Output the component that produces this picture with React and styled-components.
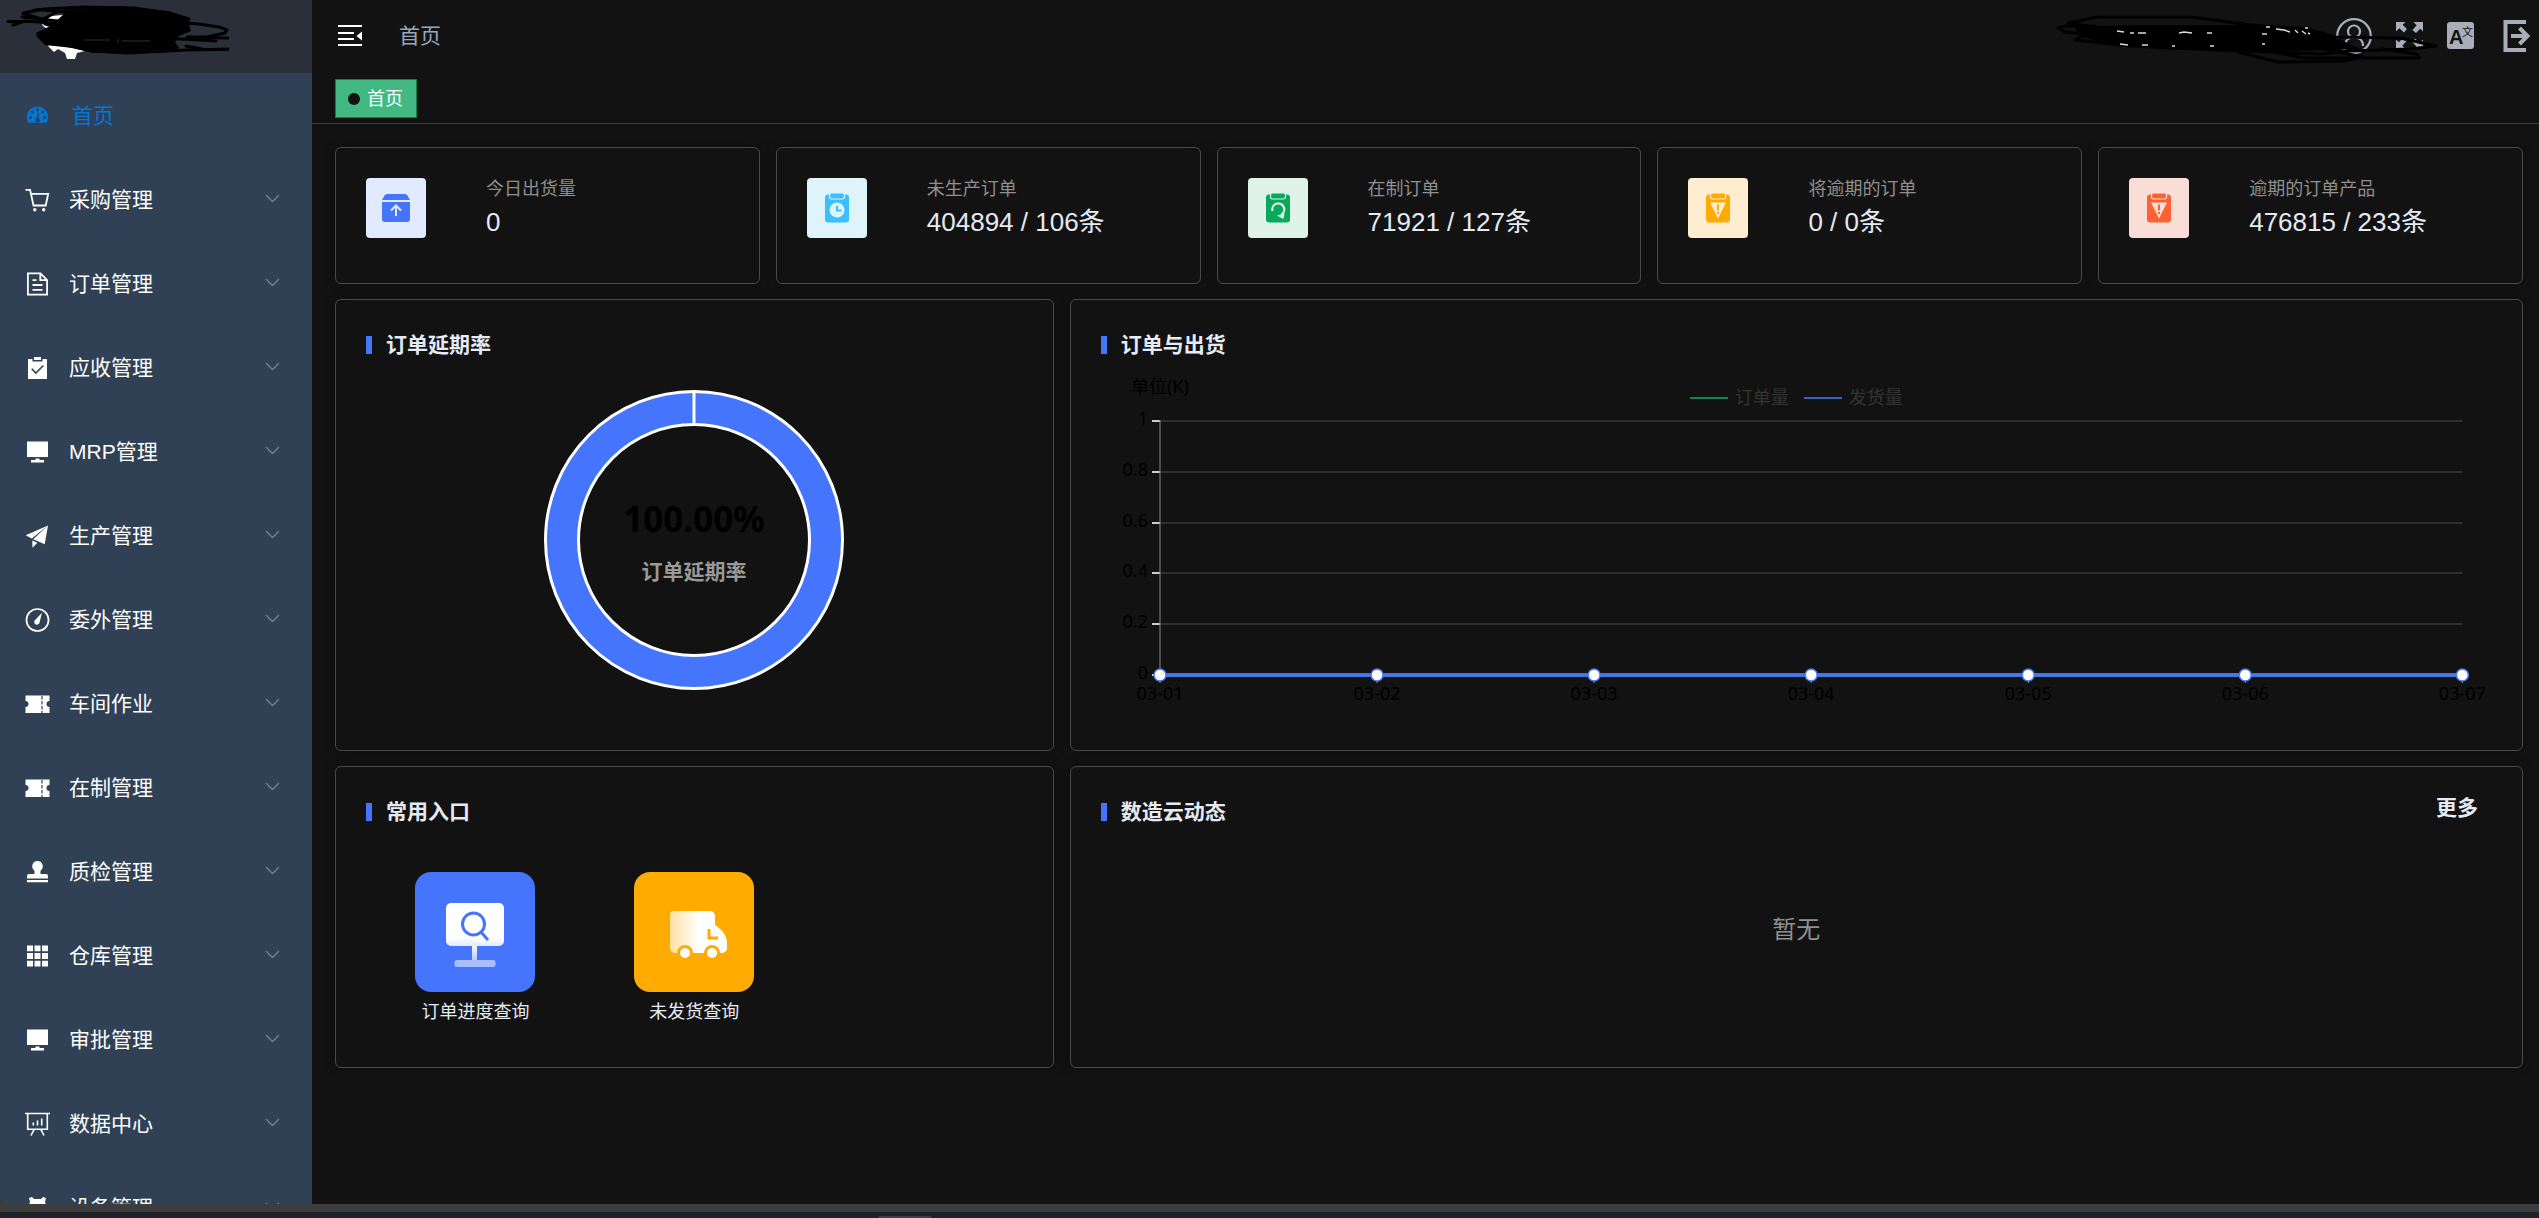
import React from "react";
import styled, { createGlobalStyle } from "styled-components";

const ui = '"Liberation Sans", "Noto Sans CJK SC", sans-serif';
const chartFont = '"Noto Sans", "Noto Sans CJK SC", sans-serif';

const GlobalStyle = createGlobalStyle`
  *, *::before, *::after { box-sizing: border-box; }
  body { margin: 0; background: #121212; color: #e5eaf3; font-family: ${ui}; overflow: hidden; }
  button { font: inherit; color: inherit; background: none; border: 0; padding: 0; cursor: pointer; }
  a { color: inherit; text-decoration: none; }
  ul { list-style: none; margin: 0; padding: 0; }
  h2, p { margin: 0; }
  svg { display: block; }
`;

const Screen = styled.div`
  display: flex;
  flex-direction: column;
  height: 100vh;
  background: #3c3c3c;
`;

const Shell = styled.div`
  display: flex;
  flex: 1;
  min-height: 0;
`;

const Taskbar = styled.footer`
  display: flex;
  align-items: flex-end;
  flex: none;
  height: 14px;
  padding-left: 878px;
  border-top: 8px solid #3d3d3d;
  background: #1f2227;
`;

const TaskTab = styled.div`
  width: 54px;
  height: 2px;
  border-radius: 2px 2px 0 0;
  background: #3c4046;
`;

const Sidebar = styled.aside`
  flex: none;
  width: 312px;
  overflow: hidden;
  border-bottom-left-radius: 8px;
  background: #304156;
`;

const Brand = styled.div`
  height: 73px;
  padding: 5px 0 0 5px;
  background: #2b2f3a;
`;

const Menu = styled.ul`
  padding-top: 1px;
`;

const MenuButton = styled.button`
  display: flex;
  align-items: center;
  width: 100%;
  height: 84px;
  padding: 0 32px 0 25px;
  gap: ${(p) => (p.$active ? 22 : 19)}px;
  color: ${(p) => (p.$active ? "#0077d9" : "#ffffff")};
  font-size: 21px;
  line-height: 28px;
  text-align: left;
`;

const MenuText = styled.span`
  flex: 1;
`;

const Page = styled.div`
  display: flex;
  flex-direction: column;
  flex: 1;
  min-width: 0;
  background: #121212;
`;

const Header = styled.header`
  position: relative;
  display: flex;
  align-items: center;
  height: 73px;
  padding: 0 8px 2px 26px;
`;

const Crumb = styled.a`
  flex: 1;
  margin-left: 37px;
  color: #97a8be;
  font-size: 21px;
  line-height: 28px;
`;

const Tools = styled.div`
  display: flex;
  align-items: center;
  gap: 24px;
  color: #a9aeb8;
`;

const Redaction = styled.div`
  position: absolute;
  top: 14px;
  right: 98px;
  pointer-events: none;
`;

const Tabs = styled.nav`
  display: flex;
  padding: 6px 23px 5px;
  border-bottom: 1px solid #3c3c3e;
`;

const Tab = styled.a`
  display: flex;
  align-items: center;
  gap: 7px;
  height: 39px;
  padding: 0 13px 0 12px;
  border: 1px solid #0f8049;
  background: #42b983;
  color: #ffffff;
  font-size: 18px;
  line-height: 24px;
`;

const Dot = styled.span`
  width: 12px;
  height: 12px;
  border-radius: 50%;
  background: #121212;
`;

const Content = styled.main`
  display: flex;
  flex-direction: column;
  gap: 15px;
  padding: 23px 16px 0 23px;
`;

const Stats = styled.section`
  display: grid;
  grid-template-columns: repeat(5, 1fr);
  gap: 16px;
`;

const Card = styled.section`
  border: 1px solid #4a4a4c;
  border-radius: 6px;
  background: #121212;
  box-shadow: 0 0 12px rgba(0, 0, 0, 0.3);
`;

const StatCard = styled(Card)`
  display: flex;
  gap: 60px;
  padding: 30px 30px 45px;
`;

const StatIcon = styled.div`
  display: grid;
  place-items: center;
  width: 60px;
  height: 60px;
  border-radius: 4px;
  background: ${(p) => p.$bg};
`;

const StatBody = styled.div`
  display: flex;
  flex-direction: column;
  gap: 6px;
`;

const StatLabel = styled.p`
  color: #8f8f8f;
  font-size: 18px;
  line-height: 22px;
`;

const StatValue = styled.p`
  font-size: 26px;
  line-height: 32px;
`;

const Panels = styled.div`
  display: grid;
  grid-template-columns: repeat(3, 1fr);
  gap: 15px 16px;
`;

const Panel = styled(Card)`
  display: flex;
  flex-direction: column;
  grid-column: span ${(p) => p.$span || 1};
  padding: 30px;
`;

const PanelHead = styled.div`
  display: flex;
  justify-content: space-between;
  align-items: flex-start;
`;

const Title = styled.h2`
  display: flex;
  align-items: center;
  gap: 14px;
  font-size: 21px;
  font-weight: 700;
  line-height: 30px;

  &::before {
    content: "";
    width: 6px;
    height: 18px;
    background: #4475fc;
  }
`;

const More = styled.a`
  margin-right: 14px;
  font-size: 21px;
  font-weight: 700;
  line-height: 21px;
`;

const DonutWrap = styled.div`
  display: flex;
  justify-content: center;
  padding: 30px 0;
`;

const ChartText = styled.text`
  font-family: ${chartFont};
  font-size: ${(p) => p.$size || 18}px;
  font-weight: ${(p) => (p.$bold ? 700 : 400)};
  fill: ${(p) => p.$fill || "#000000"};
`;

const TrendWrap = styled.div`
  position: relative;
  padding: 12px 30px 0 59px;
`;

const TrendSvg = styled.svg`
  width: 100%;
  height: 340px;
  overflow: visible;
`;

const Legend = styled.ul`
  position: absolute;
  top: 26px;
  left: 0;
  right: 0;
  display: flex;
  justify-content: center;
  gap: 15px;
`;

const LegendItem = styled.li`
  display: flex;
  align-items: center;
  gap: 7px;
  color: #333333;
  font-size: 18px;
  line-height: 24px;

  &::before {
    content: "";
    width: 38px;
    height: 2px;
    background: ${(p) => p.$color};
  }
`;

const Shortcuts = styled.div`
  display: grid;
  grid-template-columns: repeat(3, 1fr);
  padding: 45px 0 13px;
`;

const Shortcut = styled.a`
  display: flex;
  flex-direction: column;
  align-items: center;
  gap: 8px;
  font-size: 18px;
  line-height: 24px;
`;

const Empty = styled.div`
  display: grid;
  place-items: center;
  flex: 1;
  padding-bottom: 4px;
  color: #909090;
  font-size: 24px;
  line-height: 32px;
`;

const menuArt = {
  home: (
    <g>
      <path fill="currentColor" d="M2 13a10.500 10.500 0 1 1 21 0c0 1.700-.4 3.700-1.100 5.200-.2.400-.5.600-1 .6H4.100c-.5 0-.8-.2-1-.6A12 12 0 0 1 2 13z" />
      <g fill="#304156">
        <circle cx="5.500" cy="13.500" r="1.500" />
        <circle cx="7.500" cy="8" r="1.500" />
        <circle cx="12.500" cy="5.800" r="1.500" />
        <circle cx="17.500" cy="8" r="1.500" />
        <circle cx="19.500" cy="13.500" r="1.500" />
        <path d="M12.900 8.300l1.100.2-.4 5.500a2.500 2.500 0 1 1-1.700-.2z" />
      </g>
    </g>
  ),
  cart: (
    <g fill="none" stroke="currentColor" strokeWidth="1.800">
      <path d="M.5 1.900h4.600l3.400 15.600h12.200l2.500-11.700H6" />
      <circle cx="9.800" cy="21.800" r=".8" fill="currentColor" />
      <circle cx="18.700" cy="21.800" r=".8" fill="currentColor" />
    </g>
  ),
  document: (
    <g fill="none" stroke="currentColor" strokeWidth="1.800">
      <path d="M2.900 1.400h12.600l6.600 6.600v14.600H2.900zM15.300 1.600v6.600h6.600M7.500 8.200h4M7.500 13h10M7.500 17.800h10" />
    </g>
  ),
  claim: (
    <g>
      <path fill="currentColor" d="M3 3h4.500v2.500h10V3H22v20H3z" />
      <path fill="currentColor" d="M9 1h7v3H9z" />
      <path fill="none" stroke="#304156" strokeWidth="1.600" d="M6.800 12.700l4 4.300 7.600-7.500" />
    </g>
  ),
  platform: <path fill="currentColor" d="M2 1.500h21v15.500H2zM10.500 18.500h4v1.500H19v2.500H6V20h4.500z" />,
  plane: (
    <path fill="currentColor" d="M.7 11.300L23 1.500 6.800 14.500zM23 1.500l-3.300 18.800-11.500-5zM7.300 16.400l5 2.300-4.800 5z" />
  ),
  odometer: (
    <g>
      <circle cx="12.500" cy="12" r="11" fill="none" stroke="currentColor" strokeWidth="1.700" />
      <path fill="currentColor" d="M17 4.800l-2.400 9.400a2.700 2.700 0 1 1-4.700-2z" />
    </g>
  ),
  ticket: (
    <g>
      <path fill="currentColor" d="M.5 3.500h24V9a3 3 0 0 0 0 6v6H.5v-6a3 3 0 0 0 0-6z" />
      <path stroke="#304156" strokeWidth="1.200" strokeDasharray="3.500 1.500" d="M17 4v17" />
    </g>
  ),
  stamp: (
    <path fill="currentColor" d="M12.500 1a5.200 5.200 0 0 1 3.700 8.900c-1 1-.9 2.600-.5 4.100H21a2 2 0 0 1 2 2v2.500H2V16a2 2 0 0 1 2-2h5.300c.4-1.500.5-3.100-.5-4.100A5.200 5.200 0 0 1 12.500 1zM2 20h21v2.300H2z" />
  ),
  grid: (
    <path fill="currentColor" d="M2 1.500h6v5.800H2zM9.500 1.500h6v5.800h-6zM17 1.500h6v5.800h-6zM2 8.900h6v6.200H2zM9.500 8.900h6v6.200h-6zM17 8.900h6v6.200h-6zM2 16.700h6v5.800H2zM9.500 16.700h6v5.800h-6zM17 16.700h6v5.800h-6z" />
  ),
  board: (
    <g fill="none" stroke="currentColor" strokeWidth="1.600">
      <path d="M0 1.500h25M2.700 1.500v15.700h19.600V1.500M9.300 17.200L6 23.500M15.700 17.200l3.300 6.300M8.300 10.500v3M12.500 8.500v5M16.700 6.500v7" />
    </g>
  ),
  device: <path fill="currentColor" d="M4 2l3-1 2 2h7l2-2 3 1-1 4 1 3v14H4V9l1-3z" />,
};

const menuItems = [
  ["home", "首页"],
  ["cart", "采购管理"],
  ["document", "订单管理"],
  ["claim", "应收管理"],
  ["platform", "MRP管理"],
  ["plane", "生产管理"],
  ["odometer", "委外管理"],
  ["ticket", "车间作业"],
  ["ticket", "在制管理"],
  ["stamp", "质检管理"],
  ["grid", "仓库管理"],
  ["platform", "审批管理"],
  ["board", "数据中心"],
  ["device", "设备管理"],
];

const MenuIcon = ({ name }) => (
  <svg width="25" height="24" viewBox="0 0 25 24" aria-hidden="true">
    {menuArt[name]}
  </svg>
);

const Chevron = () => (
  <svg width="15" height="14" viewBox="0 0 15 14" fill="none" stroke="#74808e" strokeWidth="1.400" aria-hidden="true">
    <path d="M1 2l6.500 6.500L14 2" />
  </svg>
);

const BrandMark = () => (
  <svg width="224" height="58" viewBox="5 5 224 58" aria-hidden="true">
    <path fill="#fff" d="M42 25l9-9 12-1v8L48 30zM48 46l6 6 4-3 7 4 2 6h8l2-6 8-2-10-6-20-6z" />
    <path d="M36 33l16-8 14-13 24-4 55 1 28 4 14 6 4 12-12 5-4 6 4 6-10 4-18 1-58 0-20-5-28-3-8-8z" />
    <g fill="none" stroke="#000" strokeWidth="3" strokeLinecap="round" strokeLinejoin="round">
      <path d="M8 21.500h30l20-10 60-4 50 5 20 7-40-1-60-4-50-5-15 4 20 6 40 4" />
      <path d="M24 13l20-4 40-2 50 1 35 5 20 6-4 4 14 1 20 3 8 3-2 3-18 4-20 0 40 1 10 1 4 6-6 4-48 1-60 3-35-2-22-5-18-4-9-5 6-4 20-3-24-6 2-4" />
      <path d="M13 25l12-4 40 3M22 17l20 2M160 38l40 2 16 1M186 46l16 3" />
    </g>
    <path stroke="#2b2f3a" d="M84 40h26M122 41h28M118 39v4" />
  </svg>
);

const UserScribble = () => (
  <svg width="386" height="52" viewBox="2055 14 386 52" aria-hidden="true">
    <path d="M2075 27l60-2 130 0 40 4 30 8 25 12-60 2-120-1-60-4-40-9z" />
    <g fill="none" stroke="#000" strokeWidth="3" strokeLinecap="round" strokeLinejoin="round">
      <path d="M2069 23l28-6 94 0 60 8 56 4 28 8 65 1 36 8-26 3-60 2-30 3-100-4-90-4-55-6 10-6-20-2-7-4 7-2 30 0" />
      <path d="M2238 52l40 10 65-1 20-4-40-8M2264 50l40 8 115 0M2382 49l35 5 2 4M2069 23l30 5 130 1" />
    </g>
    <path
      d="M2117 31l7 1M2130 33h4M2138 33h8M2179 33l5-1 8 1M2207 33h5M2120 44l8 1M2142 45h6M2172 46h3M2210 46h4M2262 44h3M2262 34h5M2266 27h4M2276 29l8 1 6 2M2295 30l3 3M2302 31l4 3M2308 33l2 1M2305 28h3"
      stroke="#dcdcdc"
      strokeWidth="1.400"
      fill="none"
    />
  </svg>
);

const UserIcon = () => (
  <svg width="36" height="36" viewBox="0 0 36 36" fill="none" stroke="currentColor" strokeWidth="2.200" aria-hidden="true">
    <circle cx="18" cy="18" r="16.800" />
    <circle cx="18" cy="13.500" r="6" />
    <path d="M9 28c0-5.500 3.800-8.500 9-8.500s9 3 9 8.500" />
  </svg>
);

const FullscreenIcon = () => (
  <svg width="27" height="27" viewBox="0 0 27 27" fill="currentColor" aria-hidden="true">
    {[0, 90, 180, 270].map((a) => (
      <path key={a} transform={`rotate(${a} 13.5 13.5)`} d="M0 0h9.500L6.700 2.800l4.200 4.200L8 10.500 3.300 6.300 0 9.500z" />
    ))}
  </svg>
);

const LanguageIcon = () => (
  <svg width="27" height="27" viewBox="0 0 27 27" aria-hidden="true">
    <rect width="27" height="27" rx="3" fill="currentColor" />
    <text x="2" y="22" fontFamily="Liberation Sans, sans-serif" fontWeight="700" fontSize="20" fill="#121212">A</text>
    <text x="15" y="14" fontFamily="Noto Sans CJK SC, sans-serif" fontSize="11" fill="#121212">文</text>
  </svg>
);

const LogoutIcon = () => (
  <svg width="33" height="34" viewBox="0 0 33 34" fill="none" stroke="currentColor" strokeWidth="4" aria-hidden="true">
    <path d="M28 3H7.500v28H28" />
    <path d="M13 17h16M21.500 9l8 8-8 8" />
  </svg>
);

const CollapseIcon = () => (
  <svg width="24" height="24" viewBox="0 0 24 24" aria-hidden="true">
    <path fill="#fff" d="M0 1h24v2H0zM0 8h16v2H0zM0 14h16v2H0zM0 20h24v2H0zM24 7.500v9L18.500 12z" />
  </svg>
);

const StatArt = ({ kind, color, bg }) => {
  if (kind === "box") {
    return (
      <svg width="28" height="28" viewBox="0 0 28 28" aria-hidden="true">
        <path fill={color} d="M5 0h18a3 3 0 0 1 2.500 1.500L28 6H0l2.500-4.500A3 3 0 0 1 5 0zM0 8h28v17a3 3 0 0 1-3 3H3a3 3 0 0 1-3-3z" />
        <path fill={bg} opacity=".6" d="M0 6h28v2H0z" />
        <path fill="none" stroke={bg} strokeWidth="2" d="M14 22V12M9 16.500l5-5 5 5" />
      </svg>
    );
  }
  return (
    <svg width="28" height="30" viewBox="0 0 28 30" aria-hidden="true">
      <rect x="2" y="1.500" width="24" height="28" rx="3" fill={color} />
      <rect x="6.500" y="0" width="15" height="6" rx="2" fill={color} stroke={bg} strokeWidth="1.200" />
      {kind === "clock" && (
        <g>
          <circle cx="14" cy="17" r="7.500" fill={bg} />
          <path d="M14 13v4.500h4.500" fill="none" stroke={color} strokeWidth="2" />
        </g>
      )}
      {kind === "cycle" && (
        <g>
          <path d="M8.500 18a6 6 0 1 1 9 3.500" fill="none" stroke={bg} strokeWidth="2.200" />
          <path d="M13 22.500l7.500-2-1.200 5.500z" fill={bg} />
        </g>
      )}
      {kind === "warn" && (
        <g>
          <path d="M6 9.500h16l-8 16z" fill={bg} />
          <path d="M14 11.500v6M14 19v2" stroke={color} strokeWidth="2" />
        </g>
      )}
    </svg>
  );
};

const stats = [
  { kind: "box", color: "#4475fc", bg: "#e1eaff", label: "今日出货量", value: "0" },
  { kind: "clock", color: "#3bbfff", bg: "#dff3fb", label: "未生产订单", value: "404894 / 106条" },
  { kind: "cycle", color: "#06aa5a", bg: "#dff3ea", label: "在制订单", value: "71921 / 127条" },
  { kind: "warn", color: "#ffab02", bg: "#ffedcf", label: "将逾期的订单", value: "0 / 0条" },
  { kind: "warn", color: "#ff6132", bg: "#f9ded8", label: "逾期的订单产品", value: "476815 / 233条" },
];

const Donut = () => (
  <svg width="300" height="300" viewBox="0 0 300 300" role="img" aria-label="订单延期率">
    <circle cx="150" cy="150" r="132" fill="none" stroke="#4475fc" strokeWidth="33" />
    <g fill="none" stroke="#ffffff" strokeWidth="3">
      <circle cx="150" cy="150" r="148.500" />
      <circle cx="150" cy="150" r="115.500" />
      <path d="M150 1v34" />
    </g>
    <ChartText x="150" y="142" textAnchor="middle" $size={35} $bold>100.00%</ChartText>
    <ChartText x="150" y="189" textAnchor="middle" $size={21} $bold $fill="#999999">订单延期率</ChartText>
  </svg>
);

const days = ["03-01", "03-02", "03-03", "03-04", "03-05", "03-06", "03-07"];
const ticks = ["1", "0.8", "0.6", "0.4", "0.2", "0"];
const plotTop = 49;
const plotHeight = 254;

const Trend = () => {
  const base = plotTop + plotHeight;
  return (
    <TrendSvg role="img" aria-label="订单与出货">
      <ChartText x="0" y="21" textAnchor="middle">单位(K)</ChartText>
      {ticks.map((t, i) => {
        const y = plotTop + Math.round((plotHeight * i) / 5);
        return (
          <g key={t}>
            <line x1="0" x2="100%" y1={y} y2={y} stroke="#2e2e2e" strokeWidth="2" />
            <line x1="-8" x2="0" y1={y} y2={y} stroke="#cccccc" strokeWidth="2" />
            <ChartText x="-12" y={y + 4} textAnchor="end">{t}</ChartText>
          </g>
        );
      })}
      <line x1="0" x2="0" y1={plotTop - 1} y2={base} stroke="#8a8a8a" strokeWidth="1" />
      <line x1="0" x2="100%" y1={base} y2={base} stroke="#2d8a96" strokeWidth="4" />
      <line x1="0" x2="100%" y1={base} y2={base} stroke="#4475f6" strokeWidth="3.500" />
      {days.map((d, i) => {
        const x = `${(i / 6) * 100}%`;
        return (
          <g key={d}>
            <line x1={x} x2={x} y1={base} y2={base + 8} stroke="#999999" />
            <circle cx={x} cy={base} r="6" fill="#ffffff" stroke="#4475fc" strokeWidth="1.500" />
            <ChartText x={x} y={base + 25} textAnchor="middle">{d}</ChartText>
          </g>
        );
      })}
    </TrendSvg>
  );
};

const ProgressTile = () => (
  <svg width="120" height="120" viewBox="0 0 120 120" aria-hidden="true">
    <defs>
      <linearGradient id="board" x1="0" y1="0" x2="0" y2="1">
        <stop offset=".8" stopColor="#fff" />
        <stop offset="1" stopColor="#e3eaff" />
      </linearGradient>
      <linearGradient id="pole" x1="0" y1="0" x2="0" y2="1">
        <stop offset="0" stopColor="#fff" />
        <stop offset="1" stopColor="#b0c3fe" />
      </linearGradient>
    </defs>
    <rect width="120" height="120" rx="16" fill="#4475fc" />
    <path d="M57 72h5v18h-5z" fill="url(#pole)" />
    <rect x="39.500" y="88" width="41" height="7" rx="2.500" fill="#a9befe" />
    <rect x="31" y="31" width="58" height="43" rx="5" fill="url(#board)" />
    <circle cx="58.500" cy="52" r="11" fill="none" stroke="#4475fc" strokeWidth="3" />
    <path d="M66 60l7 8" stroke="#4475fc" strokeWidth="3" />
  </svg>
);

const TruckTile = () => (
  <svg width="120" height="120" viewBox="0 0 120 120" aria-hidden="true">
    <defs>
      <linearGradient id="truck" x1="0" y1="0" x2="1" y2="0">
        <stop offset="0" stopColor="#ffe0a3" />
        <stop offset=".5" stopColor="#fff" />
      </linearGradient>
    </defs>
    <rect width="120" height="120" rx="16" fill="#ffab02" />
    <path d="M40 39h36a5 5 0 0 1 5 5v9c6 4 12 10 12 18v5a5 5 0 0 1-5 5H41a5 5 0 0 1-5-5V43a4 4 0 0 1 4-4z" fill="url(#truck)" />
    <path d="M75 57v9h9" fill="none" stroke="#ffab02" strokeWidth="3" />
    {[51, 78].map((x) => (
      <circle key={x} cx={x} cy="81" r="6.500" fill="#fff" stroke="#ffab02" strokeWidth="3" />
    ))}
  </svg>
);

export default function App() {
  return (
    <Screen>
      <GlobalStyle />
      <Shell>
        <Sidebar>
          <Brand><BrandMark /></Brand>
          <nav>
            <Menu>
              {menuItems.map(([icon, text], i) => (
                <li key={text}>
                  <MenuButton type="button" $active={i === 0}>
                    <MenuIcon name={icon} />
                    <MenuText>{text}</MenuText>
                    {i > 0 && <Chevron />}
                  </MenuButton>
                </li>
              ))}
            </Menu>
          </nav>
        </Sidebar>
        <Page>
          <Header>
            <button type="button" aria-label="折叠菜单"><CollapseIcon /></button>
            <Crumb href="#home">首页</Crumb>
            <Tools>
              <button type="button" aria-label="用户"><UserIcon /></button>
              <button type="button" aria-label="全屏"><FullscreenIcon /></button>
              <button type="button" aria-label="语言"><LanguageIcon /></button>
              <button type="button" aria-label="退出"><LogoutIcon /></button>
            </Tools>
            <Redaction><UserScribble /></Redaction>
          </Header>
          <Tabs>
            <Tab href="#home"><Dot />首页</Tab>
          </Tabs>
          <Content>
            <Stats>
              {stats.map((s) => (
                <StatCard key={s.label}>
                  <StatIcon $bg={s.bg}><StatArt {...s} /></StatIcon>
                  <StatBody>
                    <StatLabel>{s.label}</StatLabel>
                    <StatValue>{s.value}</StatValue>
                  </StatBody>
                </StatCard>
              ))}
            </Stats>
            <Panels>
              <Panel>
                <PanelHead><Title>订单延期率</Title></PanelHead>
                <DonutWrap><Donut /></DonutWrap>
              </Panel>
              <Panel $span={2}>
                <PanelHead><Title>订单与出货</Title></PanelHead>
                <TrendWrap>
                  <Trend />
                  <Legend>
                    <LegendItem $color="#0b8a4d">订单量</LegendItem>
                    <LegendItem $color="#3a5fc8">发货量</LegendItem>
                  </Legend>
                </TrendWrap>
              </Panel>
              <Panel>
                <PanelHead><Title>常用入口</Title></PanelHead>
                <Shortcuts>
                  <Shortcut href="#progress"><ProgressTile />订单进度查询</Shortcut>
                  <Shortcut href="#unshipped"><TruckTile />未发货查询</Shortcut>
                </Shortcuts>
              </Panel>
              <Panel $span={2}>
                <PanelHead>
                  <Title>数造云动态</Title>
                  <More href="#more">更多</More>
                </PanelHead>
                <Empty>暂无</Empty>
              </Panel>
            </Panels>
          </Content>
        </Page>
      </Shell>
      <Taskbar><TaskTab /></Taskbar>
    </Screen>
  );
}
